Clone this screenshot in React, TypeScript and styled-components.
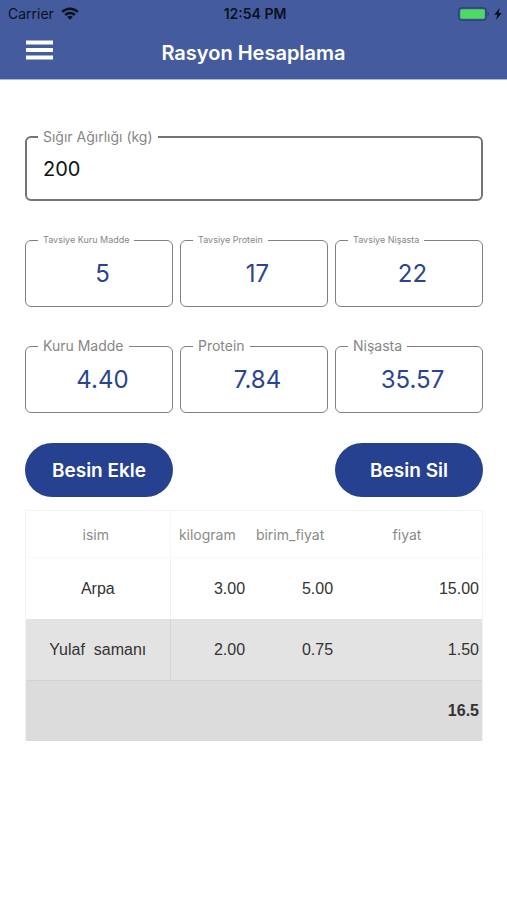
import React, { useId, useState } from "react";
import styled, { createGlobalStyle } from "styled-components";

const GlobalStyle = createGlobalStyle`
  *, *::before, *::after { box-sizing: border-box; }
  body {
    margin: 0;
    background: #ffffff;
    font-family: Inter, "Liberation Sans", sans-serif;
  }
`;

const Screen = styled.div`
  min-height: 100vh;
  background: #ffffff;
`;

const Header = styled.header`
  background: #445c9e;
  border-bottom: 1px solid #a9b9de;
`;

const StatusBar = styled.div`
  display: grid;
  grid-template-columns: 1fr auto 1fr;
  align-items: center;
  height: 27px;
  padding: 0 5px 0 8px;
  color: #0b1020;
  font-size: 14px;
  line-height: 18px;
`;

const Carrier = styled.span`
  display: flex;
  align-items: center;
  gap: 7px;
`;

const Clock = styled.time`
  font-weight: 600;
`;

const Power = styled.span`
  display: flex;
  align-items: center;
  justify-content: flex-end;
  gap: 4px;
`;

const NavBar = styled.div`
  display: grid;
  grid-template-columns: 1fr auto 1fr;
  align-items: center;
  height: 52px;
  padding: 0 24px;
`;

const MenuButton = styled.button`
  display: flex;
  justify-self: start;
  padding: 2px 2px 8px;
  border: 0;
  background: none;
  color: #ffffff;
  cursor: pointer;
`;

const Title = styled.h1`
  margin: 0;
  color: #ffffff;
  font-size: 20px;
  font-weight: 600;
  line-height: 24px;
`;

const Content = styled.main`
  padding: 48px 24px 24px 25px;
`;

const Row = styled.div`
  display: grid;
  grid-template-columns: repeat(3, minmax(0, 1fr));
  gap: 7px;
  margin-top: 30px;
`;

const Outline = styled.fieldset<{ $strong?: boolean }>`
  min-width: 0;
  margin: 0;
  padding: ${(p) => (p.$strong ? "0 5px 8px 11px" : "0 5px 8px 12px")};
  border: ${(p) => (p.$strong ? "2px solid #757575" : "1px solid #808080")};
  border-radius: 6px;
`;

const Legend = styled.legend<{ $small?: boolean }>`
  padding: 0 5px;
  color: #868686;
  font-size: ${(p) => (p.$small ? 9 : 14)}px;
  line-height: 18px;
`;

const WeightInput = styled.input`
  display: block;
  width: 100%;
  height: 45px;
  padding: 0 5px;
  border: 0;
  outline: 0;
  background: none;
  color: #111111;
  font-family: inherit;
  font-size: 20px;
`;

const ValueInput = styled.input`
  display: block;
  width: 100%;
  height: 49px;
  padding: 0;
  border: 0;
  outline: 0;
  background: none;
  color: #2a4590;
  font-family: inherit;
  font-size: 24px;
  text-align: center;
`;

const PillButton = styled.button`
  height: 54px;
  padding: 0;
  border: 0;
  border-radius: 27px;
  background: #25418f;
  color: #ffffff;
  font-family: inherit;
  font-size: 19px;
  font-weight: 600;
  cursor: pointer;

  &:last-child {
    grid-column: 3;
  }
`;

const FeedTable = styled.table`
  width: 100%;
  margin-top: 13px;
  border-collapse: separate;
  border-spacing: 0;
  border: 1px solid #f3f3f3;
  border-width: 1px 1px 0;
  table-layout: fixed;
`;

const Col = styled.col<{ $share: number }>`
  width: ${(p) => p.$share}%;
`;

const HeadCell = styled.th`
  height: 47px;
  padding: 0 4px 0 0;
  border-bottom: 1px solid #fafafa;
  color: #8a8a8a;
  font-size: 14px;
  font-weight: 400;
  text-align: center;

  &:first-child {
    border-right: 1px solid #f8f8f8;
  }
`;

const BodyRow = styled.tr<{ $shaded?: boolean }>`
  background: ${(p) => (p.$shaded ? "#e3e3e3" : "#ffffff")};
`;

const Cell = styled.td<{ $name?: boolean }>`
  height: 61px;
  padding: ${(p) => (p.$name ? "0" : "0 3px 0 0")};
  border-right: ${(p) => (p.$name ? "1px solid rgba(0, 0, 0, 0.06)" : "0")};
  color: #333333;
  font-family: "Liberation Sans", Arial, sans-serif;
  font-size: 16px;
  text-align: ${(p) => (p.$name ? "center" : "right")};
  white-space: pre;
`;

const TotalCell = styled.td`
  height: 61px;
  padding: 0 3px 0 0;
  border-top: 1px solid #d2d2d2;
  background: #dcdcdc;
  color: #333333;
  font-family: "Liberation Sans", Arial, sans-serif;
  font-size: 16px;
  font-weight: 700;
  text-align: right;
`;

const WifiIcon = () => (
  <svg width="18" height="13" viewBox="0 0 18 13" aria-hidden="true">
    <g fill="none" stroke="#0b1020" strokeWidth="2.5">
      <path d="M1.2 4.9a11.2 11.2 0 0 1 15.6 0" />
      <path d="M4.2 8a6.9 6.9 0 0 1 9.6 0" />
    </g>
    <path d="M9 12.8 6.2 10a4 4 0 0 1 5.6 0Z" fill="#0b1020" />
  </svg>
);

const BatteryIcon = () => (
  <svg width="32" height="14" viewBox="0 0 32 14" aria-hidden="true">
    <rect x="0.8" y="0.8" width="27.4" height="12.4" rx="3" fill="none" stroke="#2c3f70" strokeWidth="1.2" />
    <rect x="2.2" y="2.2" width="24.6" height="9.6" rx="1.5" fill="#4cd964" />
    <path d="M29.6 4.8a2.4 2.4 0 0 1 0 4.4Z" fill="#2c3f70" />
  </svg>
);

const BoltIcon = () => (
  <svg width="8" height="12" viewBox="0 0 8 12" aria-hidden="true">
    <path d="M5.6 0 0.3 6.7h3L2 12l5.7-7.1h-3Z" fill="#0b1020" />
  </svg>
);

const MenuIcon = () => (
  <svg width="27" height="20" viewBox="0 0 27 20" aria-hidden="true">
    <path d="M0 0.5h27v4H0zM0 8h27v4H0zM0 15.5h27v4H0z" fill="#ffffff" />
  </svg>
);

function ValueField({ label, value, small }: { label: string; value: string; small?: boolean }) {
  const id = useId();
  return (
    <Outline>
      <Legend $small={small}>
        <label htmlFor={id}>{label}</label>
      </Legend>
      <ValueInput id={id} value={value} readOnly />
    </Outline>
  );
}

const advised = [
  { label: "Tavsiye Kuru Madde", value: "5" },
  { label: "Tavsiye Protein", value: "17" },
  { label: "Tavsiye Nişasta", value: "22" },
];

const actual = [
  { label: "Kuru Madde", value: "4.40" },
  { label: "Protein", value: "7.84" },
  { label: "Nişasta", value: "35.57" },
];

const feeds = [
  { name: "Arpa", kilogram: "3.00", unitPrice: "5.00", price: "15.00" },
  { name: "Yulaf  samanı", kilogram: "2.00", unitPrice: "0.75", price: "1.50" },
];

export default function App() {
  const [weight, setWeight] = useState("200");

  return (
    <Screen lang="tr">
      <GlobalStyle />
      <Header>
        <StatusBar>
          <Carrier>
            Carrier
            <WifiIcon />
          </Carrier>
          <Clock>12:54 PM</Clock>
          <Power>
            <BatteryIcon />
            <BoltIcon />
          </Power>
        </StatusBar>
        <NavBar>
          <MenuButton type="button" aria-label="Menü">
            <MenuIcon />
          </MenuButton>
          <Title>Rasyon Hesaplama</Title>
        </NavBar>
      </Header>
      <Content>
        <Outline $strong>
          <Legend>
            <label htmlFor="weight">Sığır Ağırlığı (kg)</label>
          </Legend>
          <WeightInput
            id="weight"
            inputMode="numeric"
            value={weight}
            onChange={(e) => setWeight(e.target.value)}
          />
        </Outline>
        <Row>
          {advised.map((f) => (
            <ValueField key={f.label} label={f.label} value={f.value} small />
          ))}
        </Row>
        <Row>
          {actual.map((f) => (
            <ValueField key={f.label} label={f.label} value={f.value} />
          ))}
        </Row>
        <Row>
          <PillButton type="button">Besin Ekle</PillButton>
          <PillButton type="button">Besin Sil</PillButton>
        </Row>
        <FeedTable>
          <colgroup>
            <Col $share={31.7} />
            <Col $share={17} />
            <Col $share={19.3} />
            <Col $share={32} />
          </colgroup>
          <thead>
            <tr>
              <HeadCell scope="col">isim</HeadCell>
              <HeadCell scope="col">kilogram</HeadCell>
              <HeadCell scope="col">birim_fiyat</HeadCell>
              <HeadCell scope="col">fiyat</HeadCell>
            </tr>
          </thead>
          <tbody>
            {feeds.map((feed, i) => (
              <BodyRow key={feed.name} $shaded={i % 2 === 1}>
                <Cell $name>{feed.name}</Cell>
                <Cell>{feed.kilogram}</Cell>
                <Cell>{feed.unitPrice}</Cell>
                <Cell>{feed.price}</Cell>
              </BodyRow>
            ))}
          </tbody>
          <tfoot>
            <tr>
              <TotalCell colSpan={4}>16.5</TotalCell>
            </tr>
          </tfoot>
        </FeedTable>
      </Content>
    </Screen>
  );
}
